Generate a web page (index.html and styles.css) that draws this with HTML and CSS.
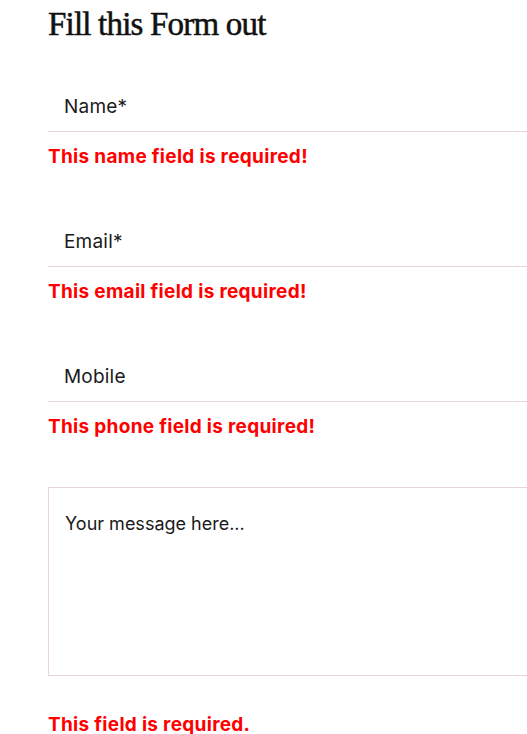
FILE: index.html
```html
<!DOCTYPE html>
<html>
<head>
<meta charset="utf-8">
<link rel="stylesheet" href="styles.css">
</head>
<body>
<div class="page">
  <h1 class="title">Fill this Form out</h1>
  <form class="form">
    <div class="group">
      <input class="field" type="text" placeholder="Name*">
      <p class="error">This name field is required!</p>
    </div>
    <div class="group">
      <input class="field" type="email" placeholder="Email*">
      <p class="error">This email field is required!</p>
    </div>
    <div class="group">
      <input class="field" type="tel" placeholder="Mobile">
      <p class="error">This phone field is required!</p>
    </div>
    <div class="group">
      <textarea class="message" placeholder="Your message here..."></textarea>
      <p class="error error-last">This field is required.</p>
    </div>
  </form>
</div>
</body>
</html>
```
FILE: styles.css
```css
html, body {
  margin: 0;
  padding: 0;
  background: #fff;
  overflow: hidden;
}
.page {
  padding: 0 0 0 48px;
  width: 500px;
}
.title {
  font-family: "Liberation Serif", serif;
  font-weight: normal;
  font-size: 33px;
  line-height: 40px;
  margin: 4px 0 0;
  color: #111;
  letter-spacing: -0.8px;
  -webkit-text-stroke: 0.5px #111;
}
.form {
  display: flex;
  flex-direction: column;
  gap: 48px;
  margin-top: 38px;
}
.group {
  display: flex;
  flex-direction: column;
}
.field {
  box-sizing: border-box;
  height: 50px;
  width: 100%;
  border: none;
  border-bottom: 1px solid #ead3dc;
  padding: 0 16px;
  font-family: Inter, sans-serif;
  font-size: 19px;
  letter-spacing: 0.2px;
  outline: none;
  background: #fff;
}
.field::placeholder, .message::placeholder {
  color: #1a1a1a;
  opacity: 1;
}
.message {
  box-sizing: border-box;
  width: 100%;
  height: 189px;
  border: 1px solid #ead3dc;
  padding: 24px 16px;
  font-family: Inter, sans-serif;
  font-size: 18px;
  line-height: 24px;
  resize: none;
  outline: none;
}
.error {
  margin: 13px 0 0;
  font-family: Inter, sans-serif;
  font-weight: 700;
  font-size: 19px;
  letter-spacing: 0.3px;
  line-height: 24px;
  color: #ff0000;
}
.error-last {
  margin-top: 37px;
}
```
